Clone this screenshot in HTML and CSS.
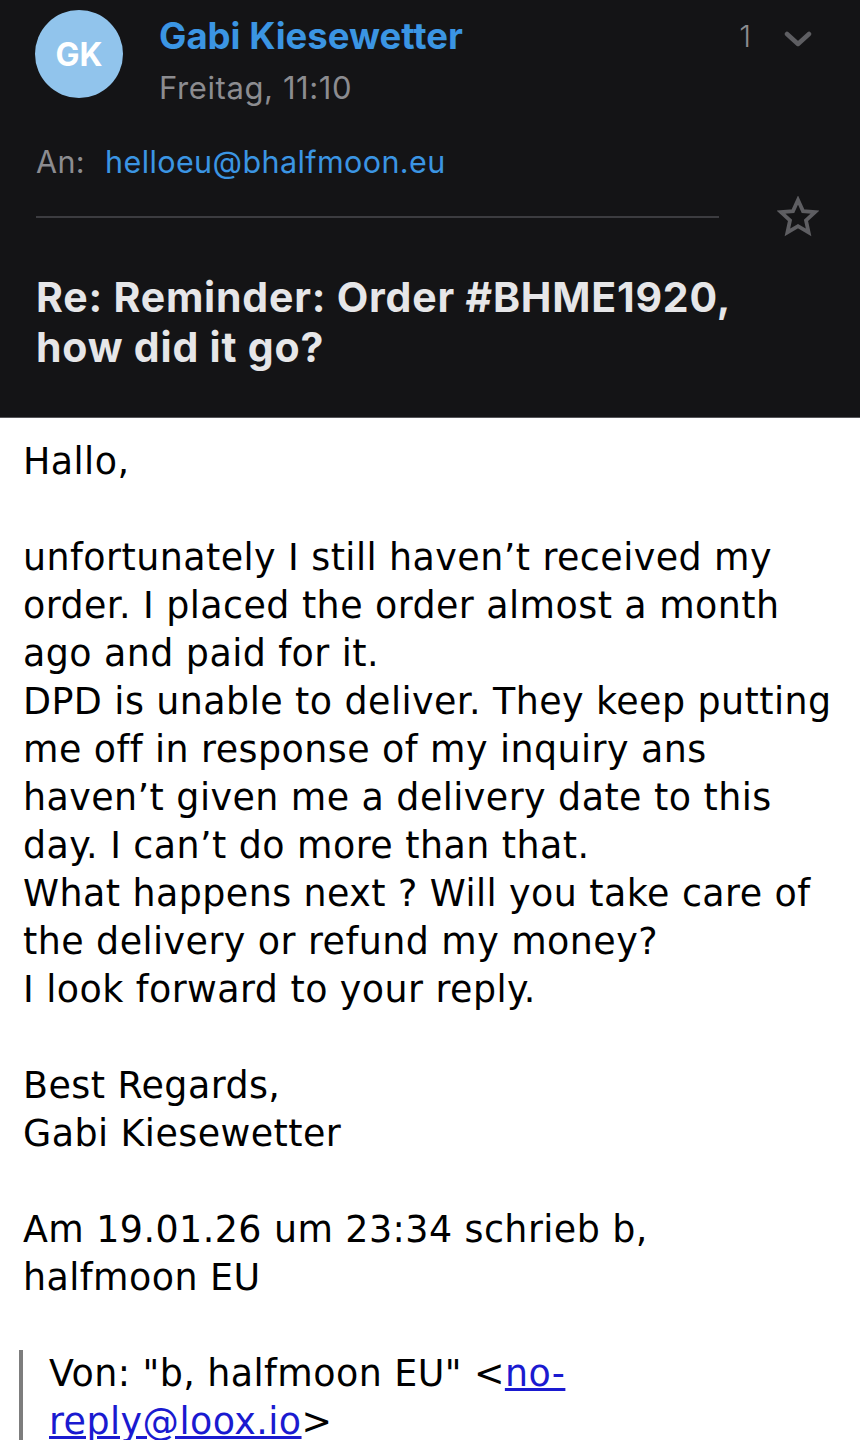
FILE: index.html
```html
<!DOCTYPE html>
<html lang="de">
<head>
<meta charset="utf-8">
<link rel="stylesheet" href="styles.css">
</head>
<body>
<header class="mail-head">
  <div class="sender-row">
    <div class="avatar">GK</div>
    <div class="sender-info">
      <div class="sender-name">Gabi Kiesewetter</div>
      <div class="sender-date">Freitag, 11:10</div>
    </div>
    <div class="thread-count">1</div>
    <svg class="chevron" width="28" height="18" viewBox="0 0 28 18"><path d="M3 4 L14 14 L25 4" fill="none" stroke="#5e5e62" stroke-width="4.5" stroke-linecap="round" stroke-linejoin="round"/></svg>
  </div>
  <div class="to-row"><span class="to-label">An:</span><span class="to-addr">helloeu@bhalfmoon.eu</span></div>
  <div class="divider-row">
    <div class="divider"></div>
    <svg class="star" width="42" height="42" viewBox="-2 -2 42 42"><path d="M19 2 L24 13.1 L36 14.1 L27 22.4 L29.6 34.4 L19 28.2 L8.4 34.4 L11 22.4 L2 14.1 L14 13.1 Z" fill="none" stroke="#5e5e62" stroke-width="3.8" stroke-linejoin="miter"/></svg>
  </div>
  <h1 class="subject">Re: Reminder: Order #BHME1920, how did it go?</h1>
</header>
<main class="mail-body">
  <p>Hallo,</p>
  <p>unfortunately I still haven’t received my order. I placed the order almost a month ago and paid for it.<br>DPD is unable to deliver. They keep putting me off in response of my inquiry ans haven’t given me a delivery date to this day. I can’t do more than that.<br>What happens next ? Will you take care of the delivery or refund my money?<br>I look forward to your reply.</p>
  <p>Best Regards,<br>Gabi Kiesewetter</p>
  <p>Am 19.01.26 um 23:34 schrieb b,<br>halfmoon EU</p>
  <blockquote class="quote">Von: "b, halfmoon EU" &lt;<a href="#">no-reply@loox.io</a>&gt;</blockquote>
</main>
</body>
</html>
```

FILE: styles.css
```css
html, body {
  margin: 0;
  padding: 0;
  background: #ffffff;
}
body {
  width: 860px;
  height: 1440px;
  overflow: hidden;
}
.mail-head {
  background: #141416;
  border-bottom: 1px solid #56565a;
  padding: 10px 0 0 36px;
  height: 407px;
  box-sizing: content-box;
  font-family: Inter, "Liberation Sans", sans-serif;
}
.sender-row {
  display: flex;
  align-items: flex-start;
}
.avatar {
  width: 88px;
  height: 88px;
  margin-left: -1px;
  border-radius: 50%;
  background: #91c4ec;
  color: #ffffff;
  font-weight: 700;
  font-size: 32px;
  display: flex;
  align-items: center;
  justify-content: center;
  flex: none;
}
.sender-info {
  margin-left: 36px;
  flex: 1;
}
.sender-name {
  color: #3b95e3;
  font-weight: 700;
  font-size: 36.5px;
  line-height: 44px;
  margin-top: 4px;
}
.sender-date {
  color: #8c8c90;
  font-size: 31px;
  line-height: 38px;
  letter-spacing: 0.6px;
  margin-top: 11px;
}
.thread-count {
  color: #8c8c90;
  font-size: 30px;
  font-weight: 300;
  line-height: 36px;
  margin-top: 8px;
  margin-right: 33px;
}
.chevron {
  margin-top: 20px;
  margin-right: 48px;
}
.to-row {
  margin-top: 37px;
  font-size: 30.5px;
  line-height: 36px;
  letter-spacing: 0.4px;
}
.to-label {
  color: #8c8c90;
  margin-right: 20px;
}
.to-addr {
  color: #3b95e3;
}
.divider-row {
  display: flex;
  align-items: center;
  margin-top: 16px;
}
.divider {
  width: 683px;
  height: 2px;
  background: #3c3c40;
}
.star {
  margin-left: 58px;
}
.subject {
  margin: 34px 0 0 0;
  max-width: 750px;
  color: #e6e6e8;
  font-weight: 700;
  font-size: 41px;
  line-height: 50px;
  letter-spacing: 0.8px;
}
.mail-body {
  padding: 20px 20px 0 23px;
  font-family: "DejaVu Sans", Verdana, sans-serif;
  font-size: 36.4px;
  line-height: 48px;
  letter-spacing: 0.45px;
  color: #000000;
}
.mail-body p {
  margin: 0 0 48px 0;
}
.quote {
  margin: 0 60px 0 -4px;
  border-left: 4px solid #7d7d7d;
  padding: 0 0 0 26px;
}
.quote a {
  color: #1a1ad0;
  text-decoration: underline;
}
```
